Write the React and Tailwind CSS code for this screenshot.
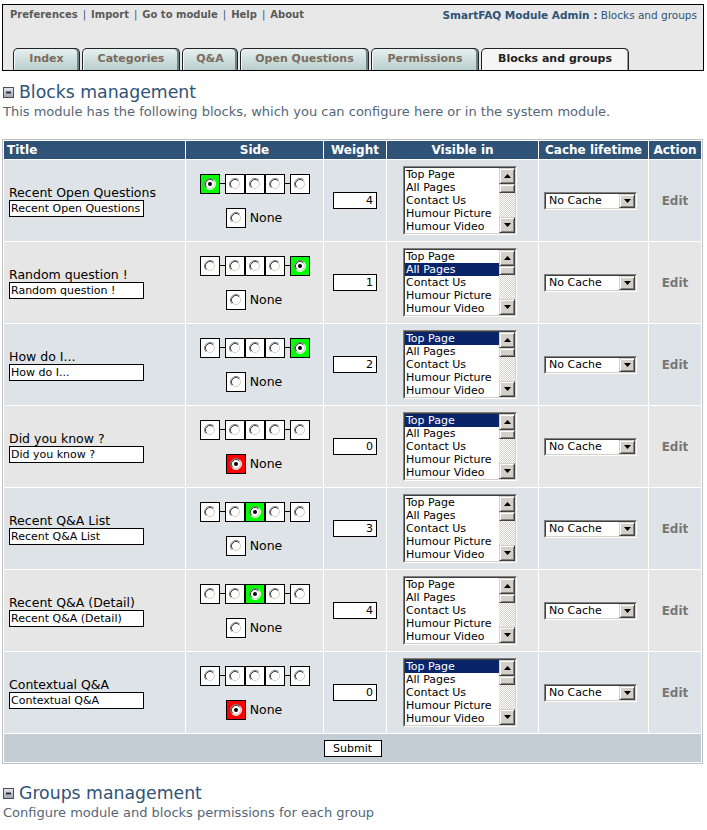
import React from "react";

const FONT = "font-['DejaVu_Sans',Verdana,sans-serif]";

function Radio({ checked }) {
  return (
    <svg width="12" height="12" viewBox="0 0 12 12" className="block">
      <circle cx="6" cy="6" r="5" fill="#fff" />
      <path d="M2.11 9.89A5.5 5.5 0 0 1 9.89 2.11" stroke="#808080" fill="none" />
      <path d="M9.89 2.11A5.5 5.5 0 0 1 2.11 9.89" stroke="#ffffff" fill="none" />
      <path d="M2.82 9.18A4.5 4.5 0 0 1 9.18 2.82" stroke="#404040" fill="none" />
      <path d="M9.18 2.82A4.5 4.5 0 0 1 2.82 9.18" stroke="#d4d0c8" fill="none" />
      {checked && <circle cx="6" cy="6" r="2" fill="#000" />}
    </svg>
  );
}

function SideBox({ checked, red }) {
  let bg = "bg-white";
  if (checked) bg = red ? "bg-[#ff0000]" : "bg-[#00ff00]";
  return (
    <div className={`w-[20px] h-[20px] border border-black flex items-center justify-center ${bg}`}>
      <Radio checked={checked} />
    </div>
  );
}

function Dash() {
  return <div className="w-[5px] h-px bg-black" />;
}

function Arrow({ up }) {
  return (
    <svg width="7" height="4" viewBox="0 0 7 4" className="block">
      {up ? <path d="M3.5 0L7 4H0Z" fill="#000" /> : <path d="M0 0H7L3.5 4Z" fill="#000" />}
    </svg>
  );
}

function SBtn({ up, cls }) {
  return (
    <div
      className={`flex items-center justify-center bg-[#d4d0c8] border border-t-[#d4d0c8] border-l-[#d4d0c8] border-r-[#404040] border-b-[#404040] shadow-[inset_1px_1px_#ffffff,inset_-1px_-1px_#808080] ${cls}`}
    >
      <Arrow up={up} />
    </div>
  );
}

function ListBox({ selected }) {
  const items = ["Top Page", "All Pages", "Contact Us", "Humour Picture", "Humour Video"];
  return (
    <div className="w-[114px] h-[69px] border border-t-[#808080] border-l-[#808080] border-r-white border-b-white">
      <div className="h-full border border-t-[#404040] border-l-[#404040] border-r-[#d4d0c8] border-b-[#d4d0c8] bg-white flex">
        <div className="flex-1 overflow-hidden">
          {items.map((it, i) => (
            <div
              key={it}
              className={`h-[13px] leading-[13px] pl-[1px] whitespace-nowrap text-[11px] ${
                i === selected ? "bg-[#0a246a] text-white" : "text-black"
              }`}
            >
              {it}
            </div>
          ))}
        </div>
        <div className="w-[16px] flex flex-col">
          <SBtn up cls="h-[16px]" />
          <div className="h-[9px] bg-[#d4d0c8] border border-t-[#d4d0c8] border-l-[#d4d0c8] border-r-[#404040] border-b-[#404040] shadow-[inset_1px_1px_#ffffff,inset_-1px_-1px_#808080]" />
          <div className="flex-1 bg-[image:repeating-conic-gradient(#d4d0c8_0%_25%,#ffffff_0%_50%)] bg-[length:2px_2px]" />
          <SBtn cls="h-[16px]" />
        </div>
      </div>
    </div>
  );
}

function CacheSelect() {
  return (
    <div className="w-[93px] h-[18px] border border-t-[#808080] border-l-[#808080] border-r-white border-b-white">
      <div className="h-full border border-t-[#404040] border-l-[#404040] border-r-[#d4d0c8] border-b-[#d4d0c8] bg-white flex items-center">
        <span className="flex-1 pl-[3px] text-[11px] leading-[14px] text-black whitespace-nowrap">No Cache</span>
        <SBtn cls="w-[16px] h-[14px]" />
      </div>
    </div>
  );
}

const rows = [
  { title: "Recent Open Questions", side: 0, weight: "4", sel: -1 },
  { title: "Random question !", side: 4, weight: "1", sel: 1 },
  { title: "How do I...", side: 4, weight: "2", sel: 0 },
  { title: "Did you know ?", side: -1, weight: "0", sel: 0 },
  { title: "Recent Q&A List", side: 2, weight: "3", sel: -1 },
  { title: "Recent Q&A (Detail)", side: 2, weight: "4", sel: -1 },
  { title: "Contextual Q&A", side: -1, weight: "0", sel: 0 },
];

function MinusIcon() {
  return (
    <svg width="11" height="11" viewBox="0 0 11 11" className="block">
      <defs>
        <linearGradient id="mg" x1="0" y1="0" x2="0" y2="1">
          <stop offset="0" stopColor="#e6e8ee" />
          <stop offset="1" stopColor="#9ea3ad" />
        </linearGradient>
      </defs>
      <rect x="0.5" y="0.5" width="10" height="10" fill="url(#mg)" stroke="#4a4f58" />
      <rect x="3" y="4.5" width="5" height="2" fill="#2a2f38" />
    </svg>
  );
}

function Heading({ title, sub }) {
  return (
    <div>
      <div className="flex items-center h-[20px] pl-[3px]">
        <MinusIcon />
        <span className="ml-[5px] text-[17.3px] leading-[20px] text-[#2f5376]">{title}</span>
      </div>
      <div className="mt-[2px] pl-[3px] text-[13px] leading-[15px] text-[#556677] whitespace-nowrap">{sub}</div>
    </div>
  );
}

function Tab({ label, w, active }) {
  return (
    <div
      className={`h-[22px] ${w} rounded-t-[5px] border border-b-0 border-[#222] flex items-center justify-center text-[11px] font-bold ${
        active
          ? "bg-[#f5f5f5] text-[#222] shadow-[inset_-1px_0_#9a9a9a]"
          : "bg-gradient-to-b from-[#e6f0f0] to-[#b9cecd] text-[#7a6c5d] shadow-[inset_1px_0_#f4fafa,inset_-2px_0_#6f8282]"
      }`}
    >
      {label}
    </div>
  );
}

export default function App() {
  return (
    <div className={`${FONT} bg-white w-[707px] h-[830px] overflow-hidden text-black pt-[4px]`}>
      {/* Header */}
      <div className="ml-[2px] w-[702px] h-[67px] border border-black bg-[#e8e8e8] flex flex-col justify-between">
        <div className="flex justify-between pl-[7px] pr-[6px] pt-[4px] text-[10px] leading-[12px]">
          <div className="font-bold text-[#5a5a5a] flex gap-[5px]">
            <span>Preferences</span>
            <span className="text-[#2f5376] font-normal">|</span>
            <span>Import</span>
            <span className="text-[#2f5376] font-normal">|</span>
            <span>Go to module</span>
            <span className="text-[#2f5376] font-normal">|</span>
            <span>Help</span>
            <span className="text-[#2f5376] font-normal">|</span>
            <span>About</span>
          </div>
          <div className="text-[#2f5376] text-[10.5px]">
            <span className="font-bold">SmartFAQ Module Admin :</span>
            <span className="text-[10.5px]"> Blocks and groups</span>
          </div>
        </div>
        <div className="flex items-end gap-[2px] pl-[10px]">
          <Tab label="Index" w="w-[67px]" />
          <Tab label="Categories" w="w-[98px]" />
          <Tab label="Q&A" w="w-[56px]" />
          <Tab label="Open Questions" w="w-[129px]" />
          <Tab label="Permissions" w="w-[108px]" />
          <Tab label="Blocks and groups" w="w-[148px]" active />
        </div>
      </div>

      <div className="mt-[11px]">
        <Heading
          title="Blocks management"
          sub="This module has the following blocks, which you can configure here or in the system module."
        />
      </div>

      {/* Table */}
      <div className="mt-[20px] ml-[2px] w-[701px] border border-[#c0c0c0] bg-white p-px">
        <div className="grid grid-cols-[181px_137px_62px_151px_109px_52px] gap-px">
          {["Title", "Side", "Weight", "Visible in", "Cache lifetime", "Action"].map((h, i) => (
            <div
              key={h}
              className={`h-[18px] bg-[#2f5376] text-white font-bold text-[12px] leading-[18px] whitespace-nowrap ${
                i === 0 ? "pl-[3px]" : "text-center"
              }`}
            >
              {h}
            </div>
          ))}
          {rows.map((r, idx) => {
            const bg = idx % 2 === 0 ? "bg-[#dee3e7]" : "bg-[#e6e6e6]";
            return (
              <React.Fragment key={r.title}>
                <div className={`h-[81px] ${bg} flex flex-col justify-center pl-[5px]`}>
                  <div className="text-[12.5px] leading-[15px] whitespace-nowrap">{r.title}</div>
                  <input
                    readOnly
                    value={r.title}
                    className="w-[135px] h-[17px] border border-black bg-white text-[11px] px-[1px] outline-none text-black"
                  />
                </div>
                <div className={`h-[81px] ${bg} flex flex-col items-center justify-center gap-[14px]`}>
                  <div className="flex items-center">
                    <SideBox checked={r.side === 0} />
                    <Dash />
                    <SideBox checked={r.side === 1} />
                    <SideBox checked={r.side === 2} />
                    <SideBox checked={r.side === 3} />
                    <Dash />
                    <SideBox checked={r.side === 4} />
                  </div>
                  <div className="flex items-center gap-[4px] pr-[1px]">
                    <SideBox checked={r.side === -1} red />
                    <span className="text-[12.5px] leading-[15px]">None</span>
                  </div>
                </div>
                <div className={`h-[81px] ${bg} flex items-center justify-center`}>
                  <input
                    readOnly
                    value={r.weight}
                    className="w-[44px] h-[17px] border border-black bg-white text-[11px] text-right pr-[3px] outline-none text-black"
                  />
                </div>
                <div className={`h-[81px] ${bg} flex items-center justify-center pr-[5px]`}>
                  <ListBox selected={r.sel} />
                </div>
                <div className={`h-[81px] ${bg} flex items-center justify-center pr-[6px]`}>
                  <CacheSelect />
                </div>
                <div className={`h-[81px] ${bg} flex items-center justify-center text-[12px] font-bold text-[#777777]`}>
                  Edit
                </div>
              </React.Fragment>
            );
          })}
          <div className="col-span-6 h-[28px] bg-[#c2cdd6] flex items-center justify-center">
            <button className="w-[58px] h-[17px] border border-black bg-white text-[11px] leading-[15px] text-black">
              Submit
            </button>
          </div>
        </div>
      </div>

      <div className="mt-[19px]">
        <Heading title="Groups management" sub="Configure module and blocks permissions for each group" />
      </div>
    </div>
  );
}
